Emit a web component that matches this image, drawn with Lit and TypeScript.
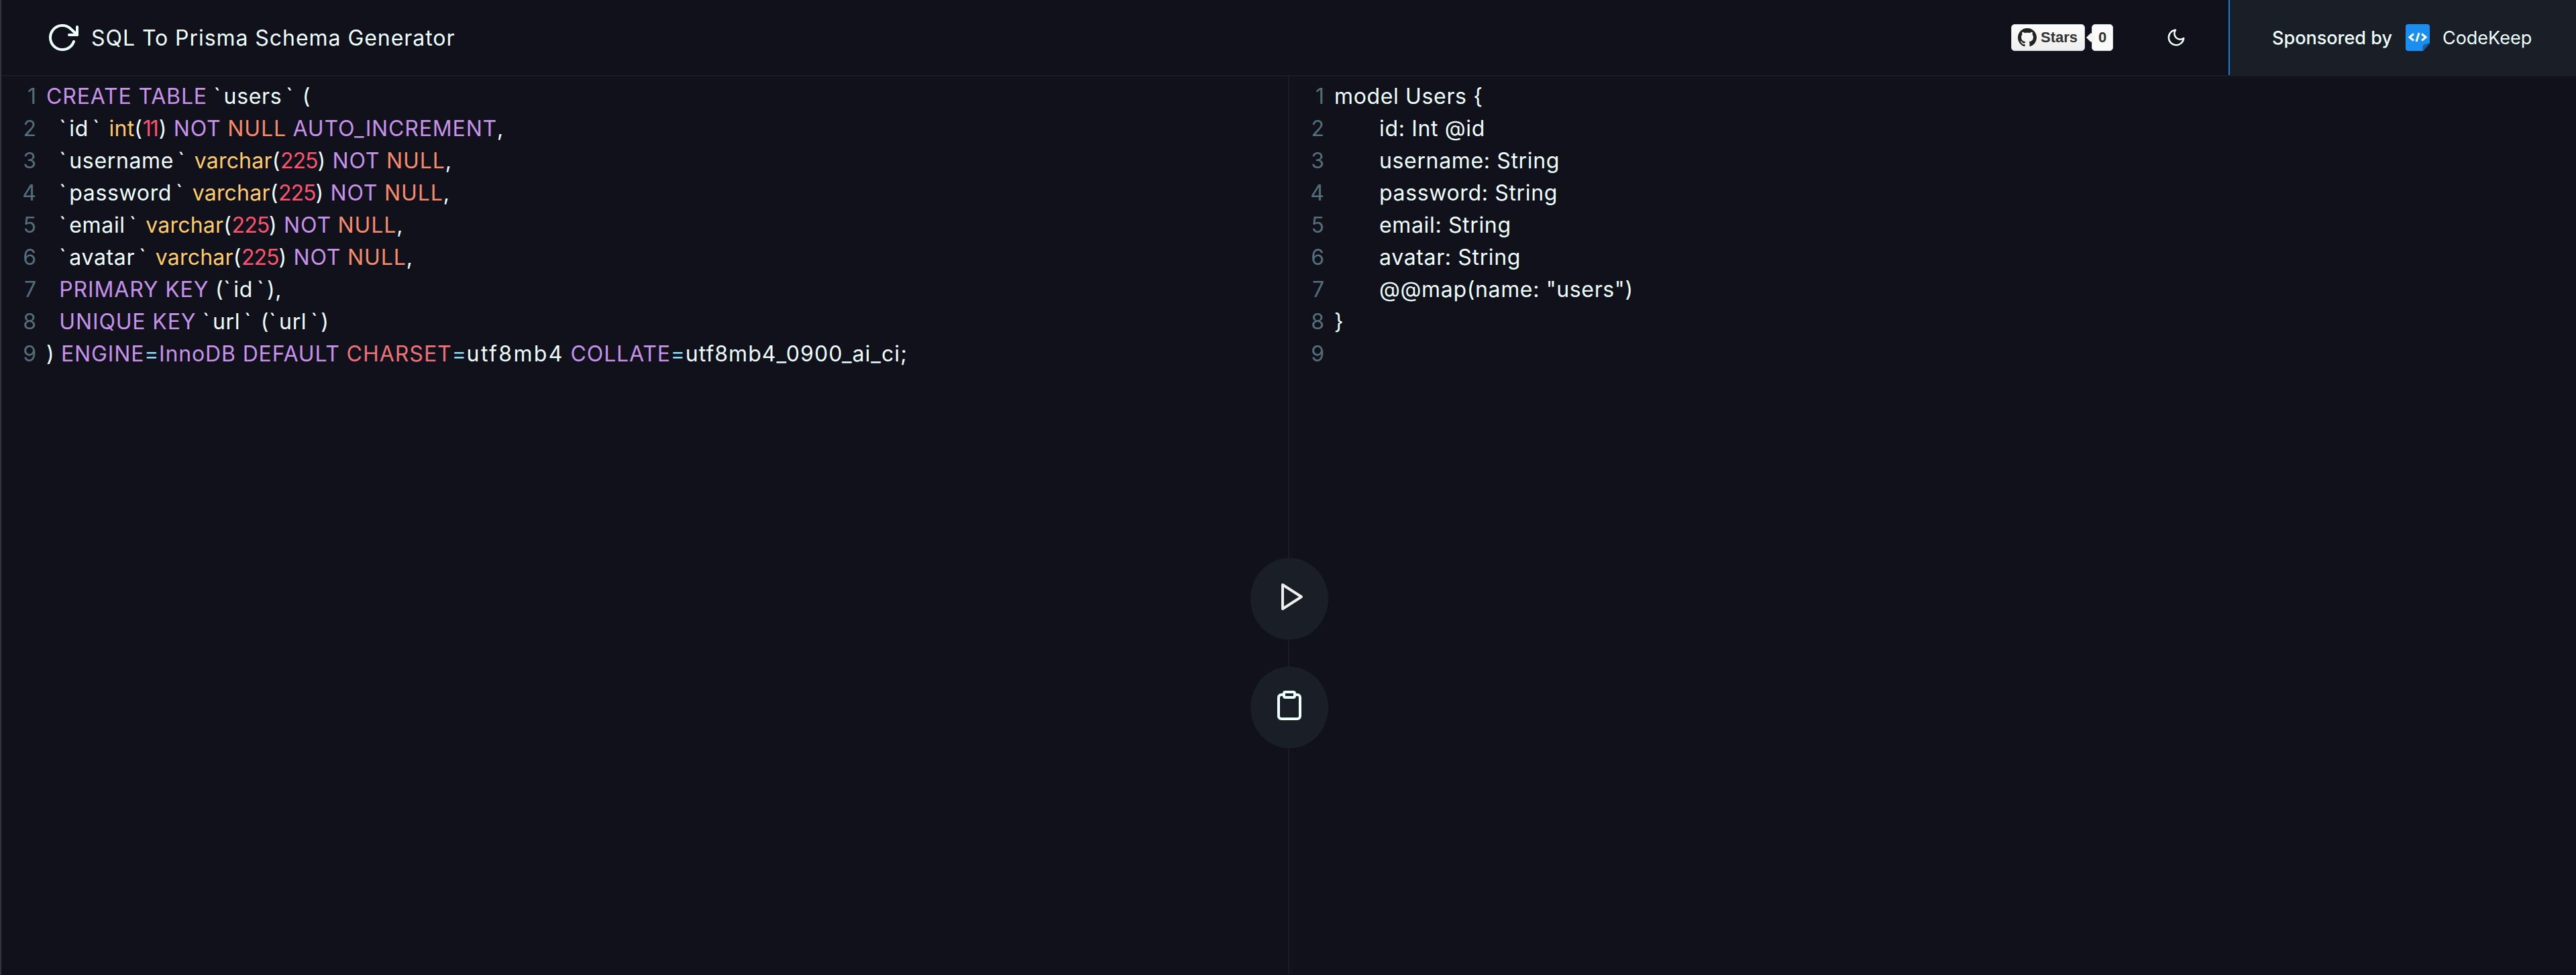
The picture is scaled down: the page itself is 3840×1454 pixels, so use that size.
import { LitElement, html, css } from "lit";
import { customElement } from "lit/decorators.js";

type Tok = [string, string];
const W = "w", P = "p", O = "o", R = "r", Y = "y", C = "c", K = "k", D = "w wide", E = "w wider", N = "r tight";

const left: Tok[][] = [
  [[P, "CREATE TABLE"], [W, " `users` ("]],
  [[W, "  `id` "], [Y, "int"], [W, "("], [N, "11"], [W, ") "], [P, "NOT"], [W, " "], [O, "NULL"], [W, " "], [P, "AUTO_INCREMENT"], [W, ","]],
  [[W, "  `username` "], [Y, "varchar"], [W, "("], [R, "225"], [W, ") "], [P, "NOT"], [W, " "], [O, "NULL"], [W, ","]],
  [[W, "  `password` "], [Y, "varchar"], [W, "("], [R, "225"], [W, ") "], [P, "NOT"], [W, " "], [O, "NULL"], [W, ","]],
  [[W, "  `email` "], [Y, "varchar"], [W, "("], [R, "225"], [W, ") "], [P, "NOT"], [W, " "], [O, "NULL"], [W, ","]],
  [[W, "  `avatar` "], [Y, "varchar"], [W, "("], [R, "225"], [W, ") "], [P, "NOT"], [W, " "], [O, "NULL"], [W, ","]],
  [[W, "  "], [P, "PRIMARY KEY"], [W, " (`id`),"]],
  [[W, "  "], [P, "UNIQUE KEY"], [W, " `url` (`url`)"]],
  [[W, ") "], [P, "ENGINE"], [C, "="], [P, "InnoDB DEFAULT"], [W, " "], [K, "CHARSET"], [C, "="], [E, "utf8mb4"], [W, " "], [P, "COLLATE"], [C, "="], [D, "utf8mb4_0900_ai_ci;"]],
];

const right: [boolean, string][] = [
  [false, "model Users {"],
  [true, "id: Int @id"],
  [true, "username: String"],
  [true, "password: String"],
  [true, "email: String"],
  [true, "avatar: String"],
  [true, '@@map(name: "users")'],
  [false, "}"],
  [false, ""],
];

const GH = "M8 0C3.58 0 0 3.58 0 8c0 3.54 2.29 6.53 5.47 7.59.4.07.55-.17.55-.38 0-.19-.01-.82-.01-1.49-2.01.37-2.53-.49-2.69-.94-.09-.23-.48-.94-.82-1.13-.28-.15-.68-.52-.01-.53.63-.01 1.08.58 1.23.82.72 1.21 1.87.87 2.33.66.07-.52.28-.87.51-1.07-1.78-.2-3.64-.89-3.64-3.95 0-.87.31-1.59.82-2.15-.08-.2-.36-1.02.08-2.12 0 0 .67-.21 2.2.82.64-.18 1.32-.27 2-.27.68 0 1.36.09 2 .27 1.53-1.04 2.2-.82 2.2-.82.44 1.1.16 1.92.08 2.12.51.56.82 1.27.82 2.15 0 3.07-1.87 3.75-3.65 3.95.29.25.54.73.54 1.48 0 1.07-.01 1.93-.01 2.2 0 .21.15.46.55.38A8.013 8.013 0 0016 8c0-4.42-3.58-8-8-8z";

const ticks = (s: string) => {
  let n = 0;
  return s.split(/(`)/).map((p) =>
    p === "`" ? html`<span class=${n++ % 2 ? "close" : "open"}>\`</span>` : p
  );
};

@customElement("app-root")
export class AppRoot extends LitElement {
  static styles = css`
    :host {
      display: block;
      height: 1454px;
      background: #10111a;
      color: #eeffff;
      font-family: Inter, "Noto Sans", sans-serif;
      border-left: 2px solid #34363f;
      box-sizing: border-box;
      overflow: hidden;
      position: relative;
    }
    .head {
      display: flex;
      align-items: stretch;
      height: 114px;
      box-sizing: border-box;
      border-bottom: 2px solid #1a1c25;
    }
    .brand {
      display: flex;
      align-items: center;
      flex: 1;
      padding-left: 67px;
      gap: 19px;
      font-size: 32px;
      letter-spacing: 0.95px;
    }
    .brand svg { width: 48px; height: 48px; }
    .ic { fill: none; stroke: currentColor; stroke-width: 2; stroke-linecap: round; stroke-linejoin: round; }
    .tools { display: flex; align-items: center; margin-right: 63px; }
    .gh {
      display: flex;
      align-items: center;
      gap: 6px;
      width: 110px;
      height: 40px;
      box-sizing: border-box;
      padding-left: 9px;
      border: 1px solid #d5d5d5;
      border-radius: 5px;
      background: linear-gradient(#fcfcfc, #eeeeee);
      color: #333;
      font: bold 22px "Liberation Sans", sans-serif;
    }
    .gh svg { width: 28px; height: 28px; fill: #222; flex: none; }
    .count {
      position: relative;
      display: flex;
      align-items: center;
      justify-content: center;
      margin-left: 10px;
      width: 32px;
      height: 40px;
      box-sizing: border-box;
      border: 1px solid #d5d5d5;
      border-radius: 5px;
      background: #fafafa;
      color: #333;
      font: bold 22px "Liberation Sans", sans-serif;
    }
    .count::before {
      content: "";
      position: absolute;
      left: -7px;
      top: 14px;
      width: 10px;
      height: 10px;
      background: #f4f4f4;
      transform: rotate(45deg);
    }
    .count span { position: relative; }
    .moon { width: 30px; height: 30px; margin-left: 79px; }
    .sponsor {
      display: flex;
      align-items: center;
      width: 518px;
      height: 112px;
      box-sizing: border-box;
      background: #1a1e27;
      border-left: 2px solid #1a7fd4;
      padding-left: 63px;
      font-size: 27px;
    }
    .sponsor b { font-weight: 500; }
    .sponsor svg { width: 36px; height: 40px; margin: 0 19px 0 20px; }
    .panes { display: grid; grid-template-columns: 1918px 2px 1fr; }
    .divider { background: #1a1c25; height: 1340px; }
    .pane { padding-top: 6px; font-size: 32px; line-height: 48px; }
    .row { display: flex; height: 48px; }
    .num { width: 52px; text-align: right; color: #546e7a; flex: none; }
    .code { margin-left: 15px; white-space: pre; letter-spacing: 0.65px; }
    .tab { padding-left: 67px; }
    .open { padding-right: 4px; }
    .close { padding: 0 4px 0 6px; }
    .w { color: #eeffff; }
    .wide { letter-spacing: 1.05px; }
    .wider { letter-spacing: 2.4px; }
    .p { color: #c792ea; letter-spacing: 0.85px; }
    .o { color: #f78c6c; letter-spacing: 0.9px; }
    .r { color: #ff5370; letter-spacing: -1px; }
    .tight { letter-spacing: -2px; padding-right: 2px; }
    .y { color: #ffcb6b; letter-spacing: 0.2px; }
    .c { color: #89ddff; }
    .k { color: #f07178; letter-spacing: 1px; }
    .actions {
      position: absolute;
      left: 1862px;
      top: 832px;
      display: flex;
      flex-direction: column;
      gap: 40px;
    }
    .btn {
      width: 116px;
      height: 122px;
      border-radius: 50%;
      background: #1a1e27;
      display: flex;
      align-items: center;
      justify-content: center;
      padding-bottom: 6px;
      box-sizing: border-box;
    }
    .btn svg { width: 48px; height: 48px; }
    .play { color: #eeeeee; margin-left: 8px; }
  `;

  render() {
    return html`
      <div class="head">
        <div class="brand">
          <svg viewBox="0 0 24 24" class="ic"><polyline points="23 4 23 10 17 10"></polyline><path d="M20.49 15a9 9 0 1 1-2.12-9.36L23 10"></path></svg>
          <span>SQL To Prisma Schema Generator</span>
        </div>
        <div class="tools">
          <div class="gh"><svg viewBox="0 0 16 16"><path d=${GH}></path></svg><span>Stars</span></div>
          <div class="count"><span>0</span></div>
          <svg class="ic moon" viewBox="0 0 24 24"><path d="M21 12.79A9 9 0 1 1 11.21 3 7 7 0 0 0 21 12.79z"></path></svg>
        </div>
        <div class="sponsor">
          <b>Sponsored by</b>
          <svg viewBox="0 0 36 40">
            <path d="M4 0h28a4 4 0 0 1 4 4v24L26 40H4a4 4 0 0 1-4-4V4a4 4 0 0 1 4-4z" fill="#1b8ff0"></path>
            <path d="M36 28c-5 1-9 2-10 4s-1 5 0 8z" fill="#14609f"></path>
            <path d="M12 14.5l-6 5 6 5M24 14.5l6 5-6 5M20 13l-4 13" fill="none" stroke="#fff" stroke-width="3"></path>
          </svg>
          <span>CodeKeep</span>
        </div>
      </div>
      <div class="panes">
        <div class="pane">
          ${left.map((l, i) => html`<div class="row"><div class="num">${i + 1}</div><div class="code">${l.map((t) => html`<span class=${t[0]}>${ticks(t[1])}</span>`)}</div></div>`)}
        </div>
        <div class="divider"></div>
        <div class="pane">
          ${right.map((l, i) => html`<div class="row"><div class="num">${i + 1}</div><div class="code"><span class=${l[0] ? "tab" : ""}>${l[1]}</span></div></div>`)}
        </div>
      </div>
      <div class="actions">
        <div class="btn"><svg class="ic play" viewBox="0 0 24 24"><polygon points="5 3 19 12 5 21 5 3"></polygon></svg></div>
        <div class="btn"><svg class="ic" viewBox="0 0 24 24"><path d="M16 4h2a2 2 0 0 1 2 2v14a2 2 0 0 1-2 2H6a2 2 0 0 1-2-2V6a2 2 0 0 1 2-2h2"></path><rect x="8" y="2" width="8" height="4" rx="1" ry="1"></rect></svg></div>
      </div>
    `;
  }
}
